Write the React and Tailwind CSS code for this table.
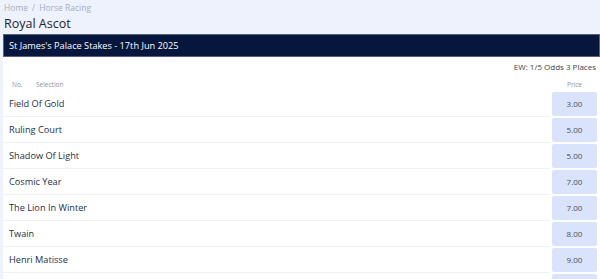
import React from 'react';

const runners = [
  { name: 'Field Of Gold', price: '3.00' },
  { name: 'Ruling Court', price: '5.00' },
  { name: 'Shadow Of Light', price: '5.00' },
  { name: 'Cosmic Year', price: '7.00' },
  { name: 'The Lion In Winter', price: '7.00' },
  { name: 'Twain', price: '8.00' },
  { name: 'Henri Matisse', price: '9.00' },
  { name: 'Delacroix', price: '11.00' },
];

function App() {
  return (
    <div className="h-[279px] overflow-hidden bg-[#eef2fc] font-['Open_Sans',sans-serif]">
      <div className="pl-[4px] pt-[1px]">
        <div className="flex gap-[4px] text-[8.5px] leading-[14px] text-[#a8adbd]">
          <span>Home</span>
          <span>/</span>
          <span>Horse Racing</span>
        </div>
        <h1 className="text-[12.5px] leading-[18px] text-[#1f2433]">Royal Ascot</h1>
      </div>
      <div className="ml-[3px] mt-[1px] bg-white">
        <div className="bg-[#06163d] h-[23px] flex items-center px-[5px] border border-[#55607a]">
          <span className="text-[9.2px] text-white">St James's Palace Stakes - 17th Jun 2025</span>
        </div>
        <div className="h-[20px] flex items-center justify-end pr-[4px] text-[8px] text-[#3a3f4d]">
          EW: 1/5 Odds 3 Places
        </div>
        <div className="flex items-center h-[15px] text-[6.5px] text-[#8d92a0]">
          <span className="pl-[9px] w-[33px]">No.</span>
          <span className="flex-1">Selection</span>
          <span className="w-[45px] mr-[3px] text-center">Price</span>
        </div>
        <div>
          {runners.map((r) => (
            <div key={r.name} className="flex items-start h-[26px]">
              <div className="flex-1 h-[25px] flex items-center pl-[6px] mr-[2px] text-[9.2px] text-[#26304a] border-b border-[#f0f2f7]">
                {r.name}
              </div>
              <div className="w-[45px] h-[24px] mr-[3px] rounded-[2px] bg-[#d9e3fb] flex items-center justify-center text-[8px] text-[#4a4f5c]">
                {r.price}
              </div>
            </div>
          ))}
        </div>
      </div>
    </div>
  );
}

export default App;
